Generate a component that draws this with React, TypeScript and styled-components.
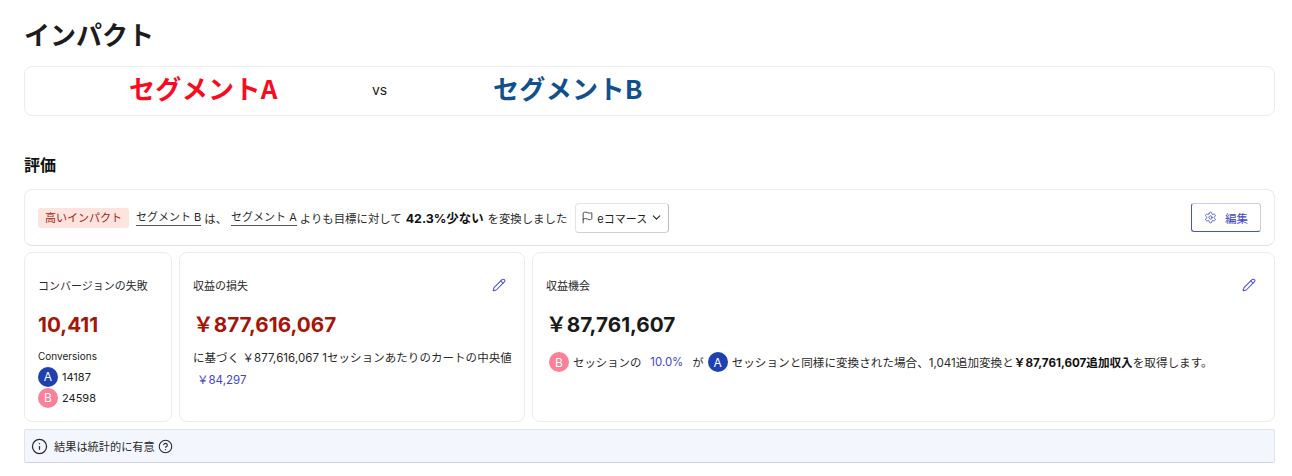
import React from 'react';
import styled, { createGlobalStyle } from 'styled-components';
import { Settings, Pencil, Info, CircleHelp, Flag, ChevronDown } from 'lucide-react';

const YEN = '\uFFE5';

const GlobalStyle = createGlobalStyle`
    html, body {
        margin: 0;
        padding: 0;
        background: #ffffff;
    }
    body {
        font-family: Inter, "Noto Sans CJK JP", sans-serif;
        color: #1a1a1a;
    }
`;

const Page = styled.div`
    width: 1251px;
    padding: 19px 0 0 24px;
    display: flex;
    flex-direction: column;
`;

const Title = styled.h1`
    margin: 0;
    height: 34px;
    font-size: 26px;
    line-height: 34px;
    font-weight: 700;
    color: #1c1c1c;
`;

const SegmentBar = styled.div`
    margin-top: 13px;
    height: 50px;
    box-sizing: border-box;
    border: 1px solid #ececec;
    border-radius: 8px;
    display: flex;
    align-items: center;
    padding: 0 0 7px 104px;
`;

const SegmentName = styled.span<{ $color: string; $width: number }>`
    width: ${({ $width }) => $width}px;
    font-size: 26px;
    line-height: 34px;
    font-weight: 700;
    letter-spacing: 0.35px;
    color: ${({ $color }) => $color};
    font-family: "Noto Sans CJK JP", sans-serif;
    white-space: nowrap;
`;

const Versus = styled.span`
    width: 121px;
    font-size: 14px;
    margin-top: 3px;
    color: #222;
`;

const SectionTitle = styled.h2`
    margin: 37px 0 0;
    height: 24px;
    font-size: 16px;
    line-height: 24px;
    font-weight: 700;
    color: #111;
`;

const SummaryBar = styled.div`
    margin-top: 12px;
    height: 57px;
    box-sizing: border-box;
    border: 1px solid #ececec;
    border-bottom-color: #e2e2e2;
    border-radius: 8px;
    padding: 0 13px;
    display: flex;
    align-items: center;
    font-size: 11.4px;
    color: #2a2a2a;
    white-space: nowrap;
`;

const ImpactTag = styled.span`
    background: #fde4df;
    color: #a61b0f;
    border-radius: 3px;
    height: 20px;
    line-height: 20px;
    padding: 0 7px;
    font-size: 11px;
    margin-right: 7px;
`;

const SegmentLink = styled.span`
    border-bottom: 1px solid #555;
    line-height: 16px;
    font-size: 11px;
    margin-right: 3px;
`;

const Gap = styled.span`
    margin-right: 4px;
`;

const Strong = styled.strong`
    font-weight: 700;
    color: #111;
    margin: 0 4px;
    font-size: 12.4px;
`;

const GoalSelect = styled.div`
    margin-left: 8px;
    height: 30px;
    width: 94px;
    box-sizing: border-box;
    border: 1px solid #e4e4e4;
    border-right-color: #bbb;
    border-bottom-color: #d0d0d0;
    border-radius: 4px;
    display: flex;
    align-items: center;
    justify-content: center;
    gap: 3px;
    font-size: 11px;
    color: #222;
`;

const EditButton = styled.button`
    margin-left: auto;
    width: 70px;
    height: 29px;
    box-sizing: border-box;
    background: #fff;
    border: 1px solid #4a50c8;
    border-top-color: #c9cbf0;
    border-right-color: #c9cbf0;
    border-radius: 3px;
    display: flex;
    align-items: center;
    justify-content: center;
    gap: 8px;
    font: inherit;
    font-size: 11.5px;
    color: #3f46c4;
    padding: 0;
`;

const CardRow = styled.div`
    margin-top: 6px;
    display: flex;
    gap: 7px;
    height: 170px;
`;

const Card = styled.div<{ $width?: number }>`
    ${({ $width }) => ($width ? `width: ${$width}px;` : 'flex: 1;')}
    box-sizing: border-box;
    border: 1px solid #ececec;
    border-radius: 8px;
    padding: 23px 13px 0;
    display: flex;
    flex-direction: column;
`;

const CardHead = styled.div`
    display: flex;
    align-items: center;
    justify-content: space-between;
    height: 18px;
    font-size: 11px;
    color: #2a2a2a;
    padding-right: 5px;
    white-space: nowrap;
`;

const BigValue = styled.div<{ $color: string }>`
    margin-top: 15px;
    height: 32px;
    font-size: 20.7px;
    line-height: 32px;
    font-weight: 700;
    color: ${({ $color }) => $color};
    white-space: nowrap;
`;

const SmallLabel = styled.div`
    margin: 8px 0 3px;
    font-size: 10px;
    line-height: 14px;
    color: #222;
`;

const CountRow = styled.div`
    display: flex;
    align-items: center;
    gap: 4px;
    font-size: 11px;
    color: #222;
    height: 21px;
`;

const Badge = styled.span<{ $kind: 'A' | 'B' }>`
    flex: none;
    width: 20px;
    height: 20px;
    border-radius: 50%;
    display: inline-flex;
    align-items: center;
    justify-content: center;
    font-size: 12px;
    color: #fff;
    background: ${({ $kind }) => ($kind === 'A' ? '#1f40ae' : '#fb8098')};
`;

const Description = styled.div`
    margin-top: 6px;
    font-size: 11.5px;
    letter-spacing: 0.05px;
    line-height: 22px;
    color: #2a2a2a;
    white-space: nowrap;
`;

const LinkValue = styled.div`
    font-size: 11.5px;
    line-height: 22px;
    color: #3f46d0;
    padding-left: 4px;
`;

const OpportunityLine = styled.div`
    margin: 11px 0 0 3px;
    display: flex;
    align-items: center;
    gap: 4px;
    font-size: 11.4px;
    color: #2a2a2a;
    white-space: nowrap;
`;

const Rate = styled.span`
    color: #3f46d0;
    margin: 0 5px;
`;

const OpportunityText = styled.span`
    font-size: 11.6px;
`;

const BoldInline = styled.strong`
    font-weight: 700;
    color: #111;
`;

const Notice = styled.div`
    margin-top: 7px;
    height: 34px;
    box-sizing: border-box;
    background: #f3f6fd;
    border: 1px solid #dfe3ec;
    border-bottom-color: #cfd4e0;
    border-radius: 2px;
    padding-left: 6px;
    display: flex;
    align-items: center;
    gap: 6px;
    font-size: 11.2px;
    color: #2a2a2a;
`;

const NoticeText = styled.span`
    margin-right: -3px;
`;

const EditPencil = styled(Pencil)`
    color: #4a50d8;
`;

const App: React.FC = () => (
    <Page>
        <GlobalStyle />
        <Title>インパクト</Title>
        <SegmentBar>
            <SegmentName $color="#fb0a1e" $width={243}>セグメントA</SegmentName>
            <Versus>vs</Versus>
            <SegmentName $color="#11508f" $width={200}>セグメントB</SegmentName>
        </SegmentBar>

        <SectionTitle>評価</SectionTitle>
        <SummaryBar>
            <ImpactTag>高いインパクト</ImpactTag>
            <SegmentLink>セグメント B</SegmentLink>
            <Gap>は、</Gap>
            <SegmentLink>セグメント A</SegmentLink>
            よりも目標に対して
            <Strong>42.3%少ない</Strong>
            を変換しました
            <GoalSelect>
                <Flag size={13} strokeWidth={1.5} />
                eコマース
                <ChevronDown size={13} strokeWidth={2} />
            </GoalSelect>
            <EditButton>
                <Settings size={13} strokeWidth={1.5} />
                編集
            </EditButton>
        </SummaryBar>

        <CardRow>
            <Card $width={148}>
                <CardHead>コンバージョンの失敗</CardHead>
                <BigValue $color="#a31608">10,411</BigValue>
                <SmallLabel>Conversions</SmallLabel>
                <CountRow><Badge $kind="A">A</Badge>14187</CountRow>
                <CountRow><Badge $kind="B">B</Badge>24598</CountRow>
            </Card>
            <Card $width={346}>
                <CardHead>
                    収益の損失
                    <EditPencil size={14} strokeWidth={1.75} />
                </CardHead>
                <BigValue $color="#a31608">{YEN}877,616,067</BigValue>
                <Description>に基づく {YEN}877,616,067 1セッションあたりのカートの中央値</Description>
                <LinkValue>{YEN}84,297</LinkValue>
            </Card>
            <Card>
                <CardHead>
                    収益機会
                    <EditPencil size={14} strokeWidth={1.75} />
                </CardHead>
                <BigValue $color="#1a1a1a">{YEN}87,761,607</BigValue>
                <OpportunityLine>
                    <Badge $kind="B">B</Badge>
                    セッションの
                    <Rate>10.0%</Rate>
                    が
                    <Badge $kind="A">A</Badge>
                    <OpportunityText>
                        セッションと同様に変換された場合、1,041追加変換と
                        <BoldInline>{YEN}87,761,607追加収入</BoldInline>
                        を取得します。
                    </OpportunityText>
                </OpportunityLine>
            </Card>
        </CardRow>

        <Notice>
            <Info size={17} strokeWidth={1.75} />
            <NoticeText>結果は統計的に有意</NoticeText>
            <CircleHelp size={15} strokeWidth={1.75} />
        </Notice>
    </Page>
);

export default App;
